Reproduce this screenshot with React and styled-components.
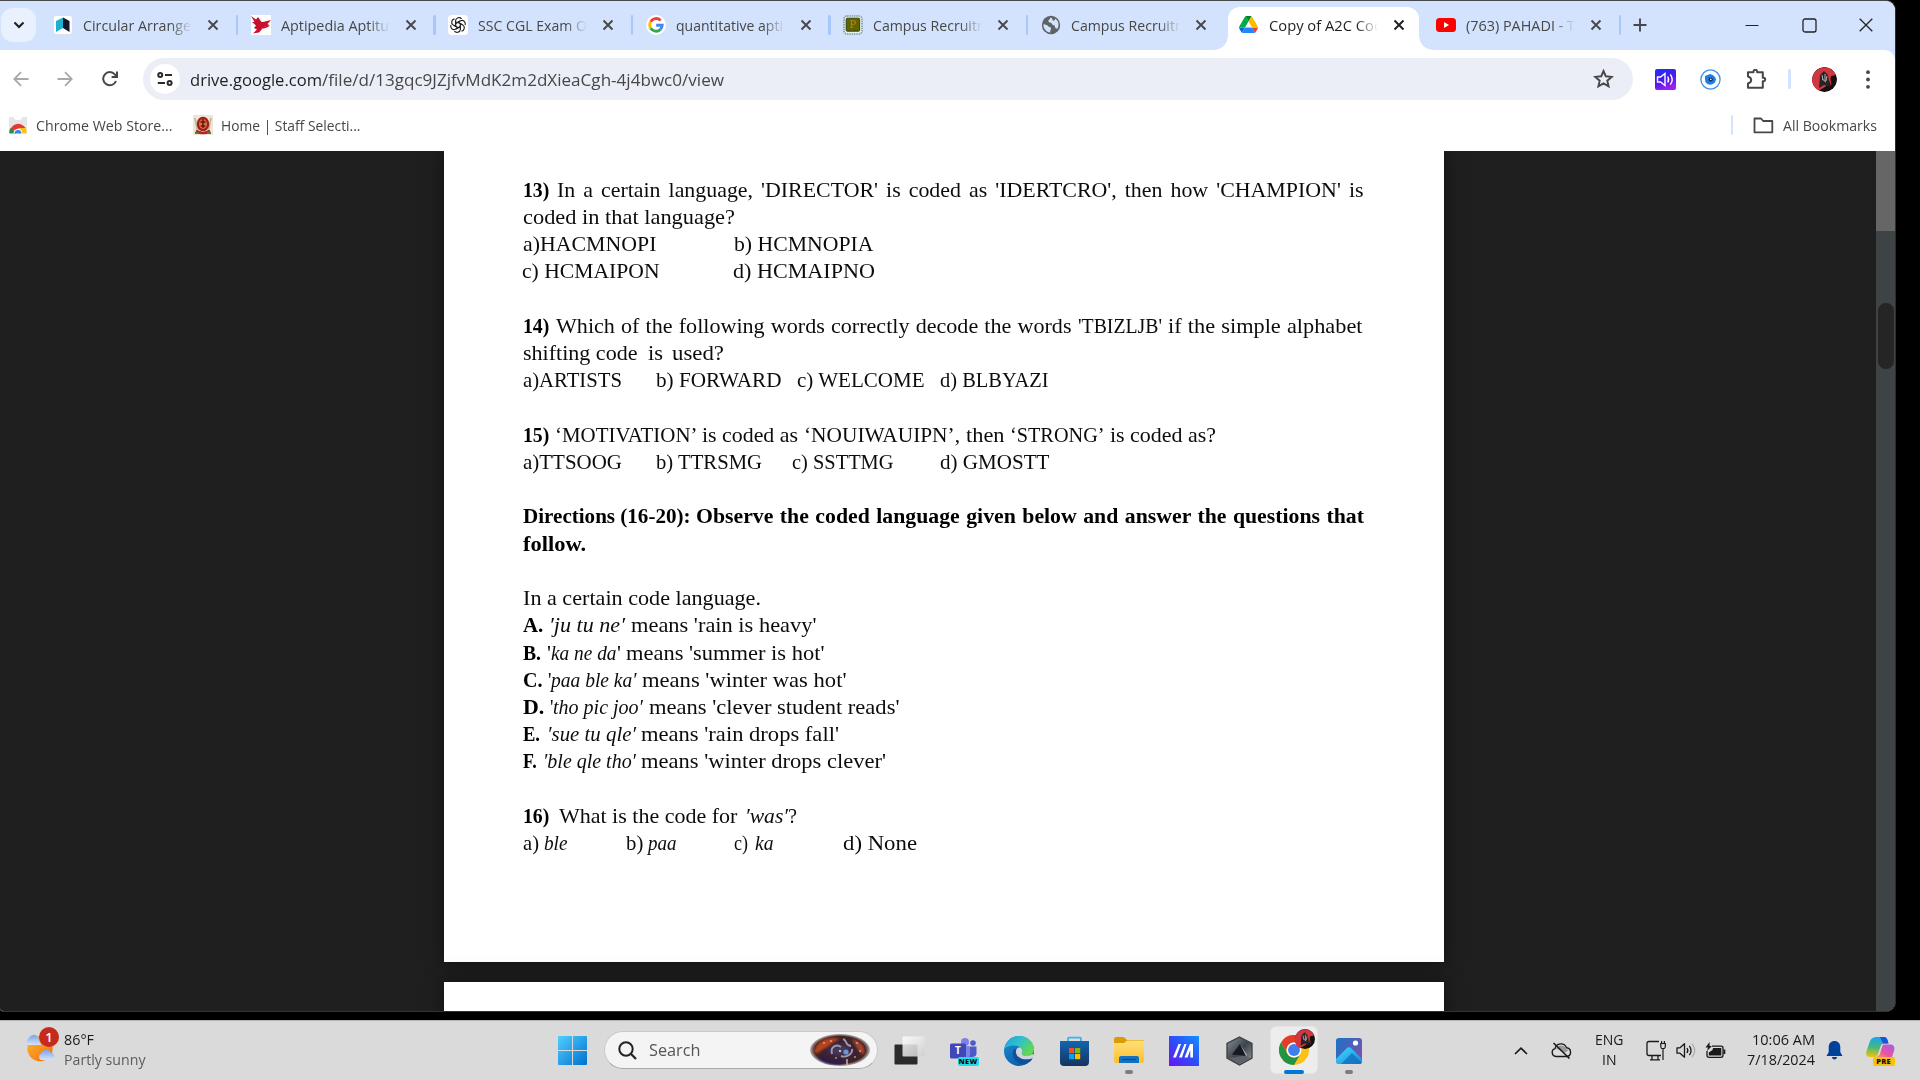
import React, { useLayoutEffect, useRef, useState } from "react";
import styled, { createGlobalStyle, css } from "styled-components";

const GlobalStyle = createGlobalStyle`
  * { box-sizing: border-box; }
  body { margin: 0; background: #000; overflow: hidden; }
  svg { display: block; flex: none; }
`;

const ui = `"Open Sans", "Noto Sans", sans-serif`;
const serif = `"Liberation Serif", serif`;

/* ---------- text set to a given measure ---------- */

const Measure = styled.span`
  display: block;
  flex: none;
  width: ${(p) => p.$w}px;
  margin-left: ${(p) => p.$ml || 0}px;
  white-space: pre;
`;
const Stretch = styled.span`
  display: inline-block;
  transform-origin: 0 50%;
  white-space: pre;
  vertical-align: top;
`;

function Fit({ w, ml, children, className }) {
  const ref = useRef(null);
  const [scale, setScale] = useState(1);
  useLayoutEffect(() => {
    ref.current.style.transform = "none";
    const natural = ref.current.getBoundingClientRect().width;
    ref.current.style.transform = `scaleX(${w / natural})`;
    setScale(w / natural);
  }, [w]);
  return (
    <Measure $w={w} $ml={ml} className={className}>
      <Stretch ref={ref} style={{ transform: `scaleX(${scale})` }}>{children}</Stretch>
    </Measure>
  );
}

/* ---------- shell ---------- */

const Desktop = styled.div`
  width: 1920px;
  height: 1080px;
  display: flex;
  flex-direction: column;
  background: #000;
  font-family: ${ui};
  overflow: hidden;
`;
const BrowserWindow = styled.div`
  width: 1896px;
  height: 1012px;
  margin-bottom: 8px;
  display: flex;
  flex-direction: column;
  border-top: 1px solid #47494d;
  border-right: 1px solid #2b2d2f;
  border-bottom: 1px solid #333;
  border-radius: 0 10px 10px 4px;
  overflow: hidden;
  background: #d3e3fd;
`;

/* ---------- tab strip ---------- */

const TabStrip = styled.div`
  height: 49px;
  flex: none;
  display: flex;
  background: #d3e3fd;
`;
const TabSearch = styled.div`
  width: 35px;
  height: 34px;
  margin: 7px 6px 0 1px;
  border-radius: 12px;
  background: #e9f0fe;
  display: flex;
  align-items: center;
  justify-content: center;
`;
const Tab = styled.div`
  position: relative;
  width: 197.6px;
  height: 49px;
  flex: none;
  display: flex;
  align-items: center;
  padding: 0 0 1px 11px;
  color: ${(p) => (p.$active ? "#1f1f1f" : "#474747")};
`;
const ActiveShape = styled.div`
  position: absolute;
  left: 0;
  top: 6px;
  width: 191.5px;
  height: 43px;
  border-radius: 12px 12px 0 0;
  background: #fff;
  &::before, &::after {
    content: "";
    position: absolute;
    bottom: 0;
    width: 14px;
    height: 14px;
  }
  &::before { left: -14px; background: radial-gradient(circle at 0 0, transparent 13.5px, #fff 14px); }
  &::after { right: -14px; background: radial-gradient(circle at 100% 0, transparent 13.5px, #fff 14px); }
`;
const Favicon = styled.div`
  position: relative;
  width: 20px;
  height: 20px;
  flex: none;
`;
const TabTitle = styled.div`
  position: relative;
  width: 109px;
  margin-left: 10px;
  font-size: 15px;
  line-height: 22px;
  overflow: hidden;
  mask-image: linear-gradient(90deg, #000 80%, transparent 100%);
`;
const TabClose = styled.div`
  position: relative;
  width: 12px;
  margin-left: 15px;
`;
const TabRule = styled.div`
  width: 2.5px;
  height: 20px;
  margin-left: 16.5px;
  border-radius: 2px;
  background: #a8c7fa;
`;
const NewTab = styled.div`
  width: 34px;
  display: flex;
  align-items: center;
  justify-content: center;
  padding-bottom: 1px;
`;
const Controls = styled.div`
  margin-left: auto;
  padding: 0 22px 1px 0;
  display: flex;
  align-items: center;
  gap: 42.5px;
`;

const CloseGlyph = () => (
  <svg width="12" height="12" viewBox="0 0 12 12">
    <path d="M1.5 1.5 L10.5 10.5 M10.5 1.5 L1.5 10.5" stroke="currentColor" strokeWidth="1.9" />
  </svg>
);

/* ---------- favicons ---------- */

const FavBook = () => (
  <svg width="20" height="20" viewBox="0 0 20 20">
    <rect x="0.4" y="0.4" width="19" height="19" rx="3" fill="#fff" stroke="#c9d6ea" strokeWidth=".6" />
    <path d="M3 6 L10 2.5 V13 L3 17 Z" fill="#1fb0d0" />
    <path d="M10 2.5 L16.5 6 V17 L10 13 Z" fill="#11182b" />
  </svg>
);
const FavBird = () => (
  <svg width="20" height="20" viewBox="0 0 20 20">
    <rect width="20" height="20" fill="#fff" />
    <path d="M0 1 L5 4.5 L7 2 L10.5 7 L12 7 L20 5 L16.5 9 L19 10.5 L15 11 L12 13 L8 17.5 L2 18.5 L6 14.5 L3 13 L5 10.5 L1 7 L3.5 7 Z" fill="#c8102e" />
    <path d="M12 13 L17.5 11" stroke="#c8102e" strokeWidth="1.6" fill="none" />
  </svg>
);
const FavGpt = () => (
  <svg width="20" height="20" viewBox="0 0 20 20">
    <rect width="20" height="20" rx="4" fill="#fff" />
    <g fill="none" stroke="#222" strokeWidth="1.15">
      {[0, 60, 120, 180, 240, 300].map((a) => (
        <path key={a} transform={`rotate(${a} 10 10)`} d="M7.6 11.4 V5.6 A3.4 3.4 0 0 1 13.6 3.9 M7.6 8.6 L12.2 6" />
      ))}
    </g>
  </svg>
);
const FavGoogle = () => (
  <svg width="20" height="20" viewBox="0 0 20 20">
    <circle cx="10" cy="10" r="10" fill="#fff" />
    <g fill="none" strokeWidth="2.9">
      <path d="M14.6 5.4 A6.2 6.2 0 0 0 4.7 6.8" stroke="#ea4335" />
      <path d="M4.7 6.8 A6.2 6.2 0 0 0 4.7 13.2" stroke="#fbbc05" />
      <path d="M4.7 13.2 A6.2 6.2 0 0 0 14.2 14.6" stroke="#34a853" />
      <path d="M14.2 14.6 A6.2 6.2 0 0 0 16.2 10.3 H10.2" stroke="#4285f4" />
    </g>
  </svg>
);
const PLetter = styled.span`
  position: absolute;
  left: 6px;
  top: 1px;
  font: 12px/16px ${serif};
  color: #b8860b;
`;
const FavP = () => (
  <>
    <svg width="20" height="20" viewBox="0 0 20 20">
      <rect x="1" y="1" width="18" height="18" rx="3" fill="#e8f1ec" stroke="#7d9c98" strokeWidth="1.6" strokeDasharray="1.5 .8" />
      <rect x="3.2" y="3.2" width="13.4" height="13" rx="1" fill="#5f6400" stroke="#33421b" />
    </svg>
    <PLetter>P</PLetter>
  </>
);
const FavGlobe = () => (
  <svg width="20" height="20" viewBox="0 0 20 20">
    <circle cx="10" cy="10" r="9.2" fill="#5f6368" />
    <path d="M2.5 9 C4 10 6 9.5 7 11 C8 12.5 10 11.5 10 13.5 C10 15 9 15 9.2 17.4 C5.3 17.2 2 13.5 2.5 9 Z M9.5 2.6 C9 5 7 4.5 7.5 6.5 C8 8 10.5 7 11 9 C11.5 10.5 14 9.5 14 12 C14 13.5 15.5 13 16.2 14 C18.8 10.5 17.5 5.3 14 3.8 C14 6 12 6 11.5 5 C11 4 11.6 3.2 9.5 2.6 Z" fill="#d3e3fd" />
  </svg>
);
const FavDrive = () => (
  <svg width="19" height="19" viewBox="0 0 87.3 78">
    <path d="M6.6 66.85l3.85 6.65c.8 1.4 1.95 2.5 3.3 3.3L27.5 53H0c0 1.55.4 3.1 1.2 4.5z" fill="#0066da" />
    <path d="M43.65 25L29.9 1.2c-1.35.8-2.5 1.9-3.3 3.3L1.2 48.5A9 9 0 0 0 0 53h27.5z" fill="#00ac47" />
    <path d="M73.55 76.8c1.35-.8 2.5-1.9 3.3-3.3l1.6-2.75 7.65-13.25c.8-1.4 1.2-2.95 1.2-4.5H59.8l5.85 11.5z" fill="#ea4335" />
    <path d="M43.65 25L57.4 1.2C56.05.4 54.5 0 52.9 0H34.4c-1.6 0-3.15.45-4.5 1.2z" fill="#00832d" />
    <path d="M59.8 53H27.5L13.75 76.8c1.35.8 2.9 1.2 4.5 1.2h50.8c1.6 0 3.15-.45 4.5-1.2z" fill="#2684fc" />
    <path d="M73.4 26.5L60.7 4.5c-.8-1.4-1.95-2.5-3.3-3.3L43.65 25 59.8 53h27.45c0-1.55-.4-3.1-1.2-4.5z" fill="#ffba00" />
  </svg>
);
const FavYouTube = () => (
  <svg width="20" height="20" viewBox="0 0 20 20">
    <rect y="3" width="20" height="14" rx="3.5" fill="#f00" />
    <path d="M8 7 L13 10 L8 13 Z" fill="#fff" />
  </svg>
);

const TABS = [
  { icon: FavBook, title: "Circular Arrange", w: 108 },
  { icon: FavBird, title: "Aptipedia Aptitu", w: 108 },
  { icon: FavGpt, title: "SSC CGL Exam O", w: 109 },
  { icon: FavGoogle, title: "quantitative apti", w: 107 },
  { icon: FavP, title: "Campus Recruitm", w: 117 },
  { icon: FavGlobe, title: "Campus Recruitm", w: 117 },
  { icon: FavDrive, title: "Copy of A2C Cod", w: 114, active: true },
  { icon: FavYouTube, title: "(763) PAHADI - T", w: 109 },
];

/* ---------- toolbar ---------- */

const Chrome = styled.div`
  height: 101px;
  flex: none;
  background: #fff;
  border-radius: 0 10px 0 0;
  padding-top: 8px;
`;
const Toolbar = styled.div`
  height: 42px;
  display: flex;
  align-items: center;
  color: #474747;
`;
const Cell = styled.div`
  width: ${(p) => p.$w}px;
  flex: none;
  display: flex;
  align-items: center;
  justify-content: center;
`;
const Omnibox = styled.div`
  width: 1490px;
  height: 42px;
  flex: none;
  border-radius: 21px;
  background: #ebeef7;
  display: flex;
  align-items: center;
  padding: 0 19px 0 6.5px;
  font-size: 17px;
  line-height: 26px;
`;
const SiteInfo = styled.div`
  width: 30px;
  height: 30px;
  margin-right: 10.5px;
  border-radius: 50%;
  background: #fff;
  display: flex;
  align-items: center;
  justify-content: center;
`;
const Host = styled(Fit)`color: #1f1f1f; padding-top: 1px;`;
const Path = styled(Fit)`color: #474747; padding-top: 1px;`;
const Push = styled.div`margin-left: auto;`;
const Rule = styled.div`
  width: 2.5px;
  height: 20px;
  flex: none;
  border-radius: 2px;
  background: #d3e3fd;
`;
const Avatar = styled.div`
  width: 25px;
  height: 25px;
  flex: none;
  border-radius: 50%;
  overflow: hidden;
`;
const Bookmarks = styled.div`
  height: 51px;
  display: flex;
  align-items: center;
  padding: 0 18px 1px 8px;
  font-size: 15px;
  line-height: 22px;
  color: #474747;
`;

const FaceArt = ({ size }) => (
  <svg width={size} height={size} viewBox="0 0 25 25">
    <circle cx="12.5" cy="12.5" r="12.5" fill="#141112" />
    <path d="M0 12.5 A12.5 12.5 0 0 1 24 8 L19 9 L17 17 L13 20 L6 24 A12.5 12.5 0 0 1 0 12.5 Z" fill="#d3363f" />
    <path d="M8 8 L12 4 L16 8 L18 20 L12 18 L7 21 Z" fill="#2a2326" />
    <path d="M10 8 L11 13 M13 7 V14 M15 9 L14 14 M10 12 L14 15" stroke="#b9aeae" strokeWidth="1" />
    <path d="M17 7 L19 18" stroke="#e0343c" strokeWidth="1" />
  </svg>
);

/* ---------- document ---------- */

const Viewer = styled.div`
  flex: 1;
  min-height: 0;
  display: flex;
  background: #1f1f1f;
`;
const Canvas = styled.div`
  width: 1876px;
  padding-left: 444px;
  display: flex;
  flex-direction: column;
  gap: 20px;
  overflow: hidden;
`;
const Page = styled.div`
  width: 1000px;
  height: ${(p) => p.$h}px;
  flex: none;
  background: #fff;
  box-shadow: 0 0 18px rgba(0, 0, 0, 0.5);
  padding: 25.8px 0 0 79px;
`;
const Line = styled.div`
  height: 27.23px;
  display: flex;
  font-family: ${serif};
  font-size: 20.7px;
  line-height: 27.23px;
  color: #0c0c0c;
`;
const Segment = styled(Fit)`
  ${(p) => p.$k === "b" && css`font-weight: 700; color: #000;`}
  ${(p) => p.$k === "i" && css`font-style: italic;`}
  word-spacing: ${(p) => p.$ws || 0}px;
`;
const Scrollbar = styled.div`
  width: 19px;
  background: #3e4346;
`;
const ScrollHead = styled.div`
  height: 80px;
  margin-bottom: 72px;
  background: #666;
`;
const ScrollThumb = styled.div`
  width: 16px;
  height: 66px;
  margin-left: 2px;
  border-radius: 8px;
  background: #252525;
`;

// Each segment: text, left edge, right edge, kind, word spacing
const LINES = [
  [["13)", 523, 549.3, "b"], ["In a certain language, 'DIRECTOR' is coded as 'IDERTCRO', then how 'CHAMPION' is", 557.5, 1364, "", 2.4]],
  [["coded in that language?", 523, 735]],
  [["a)HACMNOPI", 523, 656.5], ["b) HCMNOPIA", 734, 873.5]],
  [["c) HCMAIPON", 522, 659.5], ["d) HCMAIPNO", 733, 875]],
  [],
  [["14)", 523, 549.3, "b"], ["Which of the following words correctly decode the words", 556, 1071.5, "", 0.6], ["'TBIZLJB'", 1078.5, 1162.5], ["if the simple alphabet", 1168.5, 1363, "", 0.6]],
  [["shifting code", 523, 637.5], ["is", 647.5, 662.5], ["used?", 672, 724]],
  [["a)ARTISTS", 523, 622], ["b) FORWARD", 656, 781.5], ["c) WELCOME", 796.5, 924], ["d) BLBYAZI", 940, 1048.5]],
  [],
  [["15)", 523, 549.3, "b"], ["‘MOTIVATION’", 555, 697.5], ["is coded as", 702.5, 798.5], ["‘NOUIWAUIPN’,", 804.5, 960.5], ["then", 966.5, 1005], ["‘STRONG’", 1010.5, 1105], ["is coded as?", 1110, 1216]],
  [["a)TTSOOG", 523, 622], ["b) TTRSMG", 656, 762], ["c) SSTTMG", 792, 893.5], ["d) GMOSTT", 940, 1049.5]],
  [],
  [["Directions (16-20):", 523, 690.5, "b"], ["Observe the coded language given below and answer the questions that", 696, 1364, "b", 1]],
  [["follow.", 523, 586, "b"]],
  [],
  [["In a certain code language.", 523, 761]],
  [["A.", 523, 543.3, "b"], ["′ju tu ne′", 549.5, 625.5, "i"], ["means 'rain is heavy'", 631, 816.5]],
  [["B.", 523, 541, "b"], ["'", 547, 551], ["ka ne da", 551, 616.5, "i"], ["'", 616.5, 620.5], ["means 'summer is hot'", 626, 824.5]],
  [["C.", 523, 542.5, "b"], ["'", 548, 551.5], ["paa ble ka′", 551, 636.5, "i"], ["means 'winter was hot'", 642, 846.5]],
  [["D.", 523, 544.3, "b"], ["'", 550, 553.5], ["tho pic joo′", 553.5, 643.5, "i"], ["means 'clever student reads'", 649, 899.5]],
  [["E.", 523, 540, "b"], ["′sue tu qle′", 546.5, 635.5, "i"], ["means 'rain drops fall'", 641, 839]],
  [["F.", 523, 536.8, "b"], ["′ble qle tho′", 543, 636, "i"], ["means 'winter drops clever'", 641.5, 886.5]],
  [],
  [["16)", 523, 549.3, "b"], ["What is the code for", 559.5, 737.8], ["′was′", 745, 788, "i"], ["?", 788.5, 797.5]],
  [["a)", 523, 539], ["ble", 544, 567.5, "i"], ["b)", 625.5, 642.8], ["paa", 648, 676.5, "i"], ["c)", 734.5, 748.5], ["ka", 755, 773.5, "i"], ["d) None", 843, 917]],
];

function DocLine({ segments }) {
  let cursor = 523;
  return (
    <Line>
      {segments.map(([text, from, to, kind, ws], i) => {
        const ml = from - cursor;
        cursor = to;
        return <Segment key={i} ml={ml} w={to - from} $k={kind} $ws={ws}>{text}</Segment>;
      })}
    </Line>
  );
}

/* ---------- taskbar ---------- */

const Taskbar = styled.div`
  height: 60px;
  flex: none;
  display: flex;
  align-items: stretch;
  background: #dadada;
  border-top: 1px solid #b4b4b4;
  color: #1a1a1a;
  font-size: 15px;
`;
const Weather = styled.div`
  width: 545px;
  display: flex;
  padding: 8px 0 0 24px;
`;
const WeatherIcon = styled.div`
  position: relative;
  width: 40px;
  margin-top: 4px;
`;
const Badge = styled.div`
  position: absolute;
  left: 15px;
  top: -6px;
  width: 20px;
  height: 20px;
  border-radius: 50%;
  background: #c42b1c;
  color: #fff;
  font-size: 13px;
  font-weight: 600;
  line-height: 20px;
  text-align: center;
`;
const Stack = styled.div`
  display: flex;
  flex-direction: column;
  align-items: ${(p) => p.$align || "flex-start"};
  line-height: 20px;
  padding-bottom: ${(p) => p.$lift || 0}px;
`;
const Muted = styled(Fit)`color: #5c5c5c;`;
const SearchPill = styled.div`
  width: 274px;
  height: 38px;
  margin: 10px 4px 0 3.5px;
  border-radius: 19px;
  background: #f4f4f4;
  border: 1px solid #c9c9c9;
  border-bottom-color: #aaa;
  display: flex;
  align-items: center;
  padding: 0 5px 0 13px;
  font-size: 17px;
  line-height: 24px;
  color: #555;
`;
const SearchArt = styled.div`
  margin-left: auto;
  width: 62px;
  height: 33px;
  border-radius: 50%;
  filter: blur(0.7px);
`;
const TaskApp = styled.div`
  position: relative;
  width: 55px;
  flex: none;
  align-self: stretch;
  display: flex;
  align-items: center;
  justify-content: center;
`;
const ActiveTile = styled.div`
  width: 48px;
  height: 48px;
  margin-bottom: 1px;
  border-radius: 6px;
  background: #ededed;
  border: 1px solid #e4e4e4;
  display: flex;
  align-items: center;
  justify-content: center;
`;
const Indicator = styled.div`
  position: absolute;
  bottom: 6px;
  left: 50%;
  width: ${(p) => (p.$active ? 20 : 8)}px;
  height: 4px;
  border-radius: 2px;
  transform: translateX(-50%);
  background: ${(p) => (p.$active ? "#0078d4" : "#7d7d7d")};
`;
const Overlay = styled.div`
  position: absolute;
  left: 28px;
  top: 8px;
`;
const Tag = styled.div`
  position: absolute;
  left: ${(p) => p.$x}px;
  top: ${(p) => p.$y}px;
  width: ${(p) => p.$w}px;
  height: 9px;
  border-radius: 2px;
  background: ${(p) => p.$bg};
  color: #111;
  font: 800 7.5px/9px ${ui};
  letter-spacing: 0.2px;
  text-align: center;
`;
const TeamsLetter = styled.div`
  position: absolute;
  left: 13.5px;
  top: 21px;
  width: 16px;
  font: 700 10px/16px ${ui};
  color: #fff;
  text-align: center;
`;
const Tray = styled.div`
  margin-left: auto;
  display: flex;
  align-items: center;
`;

const ChromeLogo = ({ size }) => (
  <svg width={size} height={size} viewBox="0 0 48 48">
    <circle cx="24" cy="24" r="24" fill="#fbc116" />
    <path d="M3.2 12 A24 24 0 0 1 44.8 12 H24 A12 12 0 0 0 13.6 30 Z" fill="#e33b2e" />
    <path d="M3.2 12 A24 24 0 0 0 24 48 L34.4 30 A12 12 0 0 1 13.6 30 Z" fill="#229342" />
    <circle cx="24" cy="24" r="12" fill="#fff" />
    <circle cx="24" cy="24" r="9.5" fill="#3f7fed" />
  </svg>
);

const Galaxy = () => (
  <svg width="60" height="32" viewBox="0 0 60 32">
    <defs>
      <radialGradient id="gx" cx=".5" cy=".5" r=".5">
        <stop offset="0" stopColor="#4a4260" /><stop offset=".5" stopColor="#3a2238" />
        <stop offset=".85" stopColor="#43231f" /><stop offset="1" stopColor="#5a4650" stopOpacity=".4" />
      </radialGradient>
      <filter id="soft"><feGaussianBlur stdDeviation="1.2" /></filter>
    </defs>
    <ellipse cx="30" cy="16" rx="30" ry="16" fill="url(#gx)" />
    <g filter="url(#soft)">
      <path d="M4 17 C8 5 20 2 30 5 C22 8 20 12 12 16 C9 18 6 21 4 17 Z" fill="#b5451f" />
      <path d="M42 5 C50 7 56 12 54 20 C50 21 46 12 42 5 Z" fill="#a8452b" />
      <path d="M10 23 C18 29 26 29 32 28" stroke="#2a1a55" strokeWidth="4" fill="none" />
    </g>
    <path d="M22 20 C20 12 27 10 31 13 M33 5 C38 7 34 11 41 12 M31 22 C36 24 43 20 42 15 M37 25 V31" stroke="#b9b2c9" strokeWidth="1.9" strokeOpacity=".8" fill="none" />
    <circle cx="36" cy="18" r="2.6" fill="#6d94d8" />
    <g fill="#f1dfd8">
      <circle cx="14" cy="9" r=".8" /><circle cx="21" cy="7" r=".8" /><circle cx="47" cy="9" r=".8" />
      <circle cx="50" cy="17" r=".8" /><circle cx="30" cy="17" r="1.1" /><circle cx="26" cy="24" r=".8" /><circle cx="45" cy="23" r=".8" />
    </g>
  </svg>
);

function BrowserTabs() {
  return (
    <TabStrip>
      <TabSearch>
        <svg width="12" height="8" viewBox="0 0 12 8"><path d="M1.5 1.5 L6 6 L10.5 1.5" stroke="#1f1f1f" strokeWidth="2.1" fill="none" /></svg>
      </TabSearch>
      {TABS.map(({ icon: Icon, title, w, active }, i) => (
        <Tab key={i} $active={active}>
          {active && <ActiveShape />}
          <Favicon><Icon /></Favicon>
          <TabTitle><Fit w={w}>{title}</Fit></TabTitle>
          <TabClose><CloseGlyph /></TabClose>
          {!active && i !== 5 && <TabRule />}
        </Tab>
      ))}
      <NewTab>
        <svg width="14" height="14" viewBox="0 0 14 14"><path d="M7 .5 V13.5 M.5 7 H13.5" stroke="#474747" strokeWidth="1.9" /></svg>
      </NewTab>
      <Controls>
        <svg width="14" height="14" viewBox="0 0 14 14"><path d="M.5 7.5 H13.5" stroke="#222" strokeWidth="1.2" /></svg>
        <svg width="15" height="15" viewBox="0 0 15 15"><rect x="1" y="1" width="13" height="13" rx="2" fill="none" stroke="#222" strokeWidth="1.3" /></svg>
        <svg width="14" height="14" viewBox="0 0 14 14"><path d="M.7 .7 L13.3 13.3 M13.3 .7 L.7 13.3" stroke="#222" strokeWidth="1.3" /></svg>
      </Controls>
    </TabStrip>
  );
}

function BrowserToolbar() {
  return (
    <Toolbar>
      <Cell $w={41}>
        <svg width="16" height="16" viewBox="0 0 16 16"><path d="M15.5 8 H1.5 M8 1.2 L1.3 8 L8 14.8" stroke="#a9a9a9" strokeWidth="1.8" fill="none" /></svg>
      </Cell>
      <Cell $w={48}>
        <svg width="16" height="16" viewBox="0 0 16 16"><path d="M.5 8 H14.5 M8 1.2 L14.7 8 L8 14.8" stroke="#a9a9a9" strokeWidth="1.8" fill="none" /></svg>
      </Cell>
      <Cell $w={42}>
        <svg width="16" height="16" viewBox="0 0 16 16"><path d="M14 10 A6.6 6.6 0 1 1 12.8 3.4 L14.3 5" stroke="#474747" strokeWidth="2" fill="none" /><path d="M15 .5 V6 H9.6" stroke="#474747" strokeWidth="2" fill="none" /></svg>
      </Cell>
      <Cell $w={12} />
      <Omnibox>
        <SiteInfo>
          <svg width="16" height="14" viewBox="0 0 16 14">
            <g fill="none" stroke="#2b2b2b" strokeWidth="2"><circle cx="3.2" cy="3" r="2" /><circle cx="12.6" cy="11" r="2" /><path d="M8 3 H15 M.8 11 H8" /></g>
          </svg>
        </SiteInfo>
        <Host w={132}>drive.google.com</Host>
        <Path w={402}>/file/d/13gqc9JZjfvMdK2m2dXieaCgh-4j4bwc0/view</Path>
        <Push>
          <svg width="21" height="20" viewBox="0 0 21 20"><path d="M10.5 2 L12.8 7.3 L18.7 7.9 L14.3 11.7 L15.6 17.4 L10.5 14.4 L5.4 17.4 L6.7 11.7 L2.3 7.9 L8.2 7.3 Z" fill="none" stroke="#474747" strokeWidth="1.9" /></svg>
        </Push>
      </Omnibox>
      <Cell $w={64.5}>
        <svg width="21" height="21" viewBox="0 0 21 21">
          <defs><linearGradient id="vol" x1="0" y1="0" x2=".4" y2="1"><stop offset="0" stopColor="#1d33f5" /><stop offset=".6" stopColor="#4a17ee" /><stop offset="1" stopColor="#9a1ff0" /></linearGradient></defs>
          <rect width="21" height="21" rx="2" fill="url(#vol)" />
          <path d="M2.5 8 H5.5 L10 4.5 V16.5 L5.5 13 H2.5 Z M12.7 7.5 Q14.5 10.5 12.7 13.5 M15.3 5.3 Q19 10.5 15.3 15.7" stroke="#fff" strokeWidth="1.4" fill="none" />
        </svg>
      </Cell>
      <Cell $w={26}>
        <svg width="21" height="21" viewBox="0 0 21 21">
          <circle cx="10.5" cy="10.5" r="9.6" fill="#fff" stroke="#3f8fe8" strokeWidth="1.3" />
          <path d="M5 7 L10 5 Q15 6 16 10.5 Q15 15.5 10 15.8 Q5 15 5 10.5 Z" fill="#1c7fe6" /><circle cx="10.7" cy="10.5" r="2.1" fill="#0b2a52" /><circle cx="10.8" cy="10.4" r=".8" fill="#fff" />
        </svg>
      </Cell>
      <Cell $w={66}>
        <svg width="21" height="21" viewBox="0 0 21 21">
          <path d="M2 3.2 H7.5 V2.6 A1.8 1.8 0 0 1 11.1 2.6 V3.2 H16.8 V8.7 H17.4 A1.8 1.8 0 0 1 17.4 12.3 H16.8 V18.8 H2 V14.5 Q5.2 13.5 5.2 11 Q5.2 8.5 2 7.5 Z" fill="none" stroke="#474747" strokeWidth="2" strokeLinejoin="round" />
        </svg>
      </Cell>
      <Cell $w={0}><Rule /></Cell>
      <Cell $w={22} />
      <Avatar><FaceArt size={25} /></Avatar>
      <Cell $w={63}>
        <svg width="4" height="19" viewBox="0 0 4 19"><g fill="#474747"><circle cx="2" cy="2.2" r="1.9" /><circle cx="2" cy="9.5" r="1.9" /><circle cx="2" cy="16.8" r="1.9" /></g></svg>
      </Cell>
    </Toolbar>
  );
}

function BookmarkBar() {
  return (
    <Bookmarks>
      <svg width="20" height="20" viewBox="0 0 20 20">
        <path d="M1 2 H19 V18 H1 Z" fill="#e6e6e6" /><path d="M6 2 H14 V4 Q10 6 6 4 Z" fill="#fff" />
        <path d="M2 18 A8.4 8.4 0 0 1 17.6 13 L10 13.5 Z" fill="#e33b2e" />
        <path d="M2.4 13 A8.6 8.6 0 0 0 1.4 18.5 H8 Z" fill="#229342" />
        <path d="M11 13 H17.8 Q18.8 15 18.6 18.5 H12 Z" fill="#fbc116" />
        <path d="M5.5 18.5 A4.5 4.5 0 0 1 14.5 18.5 Z" fill="#fff" /><path d="M6.5 18.5 A3.5 3.5 0 0 1 13.5 18.5 Z" fill="#3f7fed" />
      </svg>
      <Fit ml={7.5} w={136.5}>Chrome Web Store...</Fit>
      <Cell $w={21} />
      <svg width="20" height="20" viewBox="0 0 20 20">
        <rect width="20" height="20" fill="#efe6da" />
        <path d="M2 3 L5 18 M18 3 L15 18" stroke="#c2b08c" strokeWidth="1.5" />
        <ellipse cx="10" cy="9" rx="6.2" ry="7.3" fill="#a01f1c" /><ellipse cx="10" cy="9" rx="4" ry="5" fill="#d1703f" />
        <path d="M10 4 V13 M7.5 7 H12.5 M7.8 11 H12.2" stroke="#6f0f12" strokeWidth="1.4" />
        <path d="M3 16 Q10 20 17 16" stroke="#b32522" strokeWidth="2.6" fill="none" /><path d="M2 18 H6 M14 18 H18" stroke="#5d7a35" strokeWidth="2" />
      </svg>
      <Fit ml={8} w={139.5}>Home | Staff Selecti...</Fit>
      <Push><Rule /></Push>
      <Cell $w={20} />
      <svg width="21" height="17" viewBox="0 0 21 17"><path d="M1.5 1.5 H8 L10.2 4 H19.3 V15.3 H1.5 Z" fill="none" stroke="#474747" strokeWidth="1.8" strokeLinejoin="round" /></svg>
      <Fit ml={9} w={94}>All Bookmarks</Fit>
    </Bookmarks>
  );
}

function WindowsTaskbar() {
  return (
    <Taskbar>
      <Weather>
        <WeatherIcon>
          <svg width="32" height="32" viewBox="0 0 32 32">
            <defs>
              <linearGradient id="sun" x1="0" y1="0" x2="1" y2="1"><stop offset="0" stopColor="#fdbb2d" /><stop offset="1" stopColor="#f26a10" /></linearGradient>
              <linearGradient id="cl" x1="0" y1="0" x2="0" y2="1"><stop offset="0" stopColor="#7ea3e8" /><stop offset="1" stopColor="#d4e3fb" /></linearGradient>
            </defs>
            <circle cx="16" cy="15.5" r="12.7" fill="url(#sun)" />
            <path d="M4 12 A4 4 0 0 1 4.5 5.5 A5.5 5.5 0 0 1 14 4 L17 12 Z" fill="url(#cl)" />
            <path d="M17 27 A3.8 3.8 0 0 1 17.3 20.2 A5.2 5.2 0 0 1 27 20 A3.6 3.6 0 0 1 28 27 Z" fill="url(#cl)" />
          </svg>
          <Badge>1</Badge>
        </WeatherIcon>
        <Stack><Fit w={30}>86°F</Fit><Muted w={81.5}>Partly sunny</Muted></Stack>
      </Weather>
      <TaskApp>
        <svg width="29" height="29" viewBox="0 0 29 29">
          <defs><linearGradient id="win" x1="0" y1="0" x2="1" y2="1"><stop offset="0" stopColor="#4fd0ff" /><stop offset="1" stopColor="#0070d0" /></linearGradient></defs>
          <path d="M0 1 Q0 0 1 0 H14 V14 H0 Z M15 0 H28 Q29 0 29 1 V14 H15 Z M0 15 H14 V29 H1 Q0 29 0 28 Z M15 15 H29 V28 Q29 29 28 29 H15 Z" fill="url(#win)" />
        </svg>
      </TaskApp>
      <SearchPill>
        <svg width="19" height="19" viewBox="0 0 19 19"><circle cx="8" cy="8" r="6.7" fill="none" stroke="#222" strokeWidth="2" /><path d="M12.8 12.8 L18 18" stroke="#222" strokeWidth="2.2" /></svg>
        <Fit ml={12.5} w={51.5}>Search</Fit>
        <SearchArt><Galaxy /></SearchArt>
      </SearchPill>
      <TaskApp>
        <svg width="31" height="29" viewBox="0 0 31 29">
          <defs><linearGradient id="tv" x1="0" y1="0" x2="1" y2="1"><stop offset="0" stopColor="#fff" /><stop offset="1" stopColor="#cfcfcf" /></linearGradient></defs>
          <rect x=".5" y="8.5" width="23" height="20" rx="1" fill="#2b2b2b" />
          <rect x="8.5" y=".5" width="22" height="20" rx="1" fill="url(#tv)" opacity=".86" />
        </svg>
      </TaskApp>
      <TaskApp>
        <svg width="28" height="30" viewBox="0 0 28 30">
          <circle cx="15" cy="6" r="4" fill="#7b83eb" /><circle cx="23" cy="7" r="2.8" fill="#5059c9" />
          <path d="M15 10.5 H26.5 V18 Q26 21 22 21 H15 Z" fill="#5059c9" /><path d="M9 10.5 H20 V19 Q19 23 13 23 Q9 22 9 18 Z" fill="#7b83eb" />
          <rect x="0" y="7.5" width="16" height="15" rx="1.5" fill="#4048b8" />
        </svg>
        <TeamsLetter>T</TeamsLetter>
        <Tag $x={21} $y={35.5} $w={21} $bg="#1fe0e6">NEW</Tag>
      </TaskApp>
      <TaskApp>
        <svg width="30" height="30" viewBox="0 0 30 30">
          <defs>
            <linearGradient id="e1" x1="0" y1="0" x2="1" y2=".6"><stop offset="0" stopColor="#1e9de0" /><stop offset=".5" stopColor="#2fc2c9" /><stop offset="1" stopColor="#63d94a" /></linearGradient>
            <linearGradient id="e2" x1="0" y1="0" x2=".6" y2="1"><stop offset="0" stopColor="#1b8fd8" /><stop offset="1" stopColor="#0b5ea8" /></linearGradient>
          </defs>
          <circle cx="15" cy="15" r="15" fill="url(#e2)" />
          <path d="M0.5 13 C2 4 9 0 15 0 C24 0 30 6 30 13 C30 18 26 20 22 20 C18 20 17 18.5 18 17 C20 12 15 9.5 10 9.5 C6 9.5 2 11 .5 13 Z" fill="url(#e1)" />
          <path d="M10 13 C6 20 12 28 20 28.5 C24 27.5 27 25 28.5 22.5 C24 25 16 24 13.5 19 C12.4 16.5 13 14.5 14 13.5 Z" fill="#11509a" />
          <path d="M18 17 C19 14.5 18 12 15.5 11.2 C11 12 11 18 14 20.5 C18 24.5 25 24 28.5 22.5 L29.8 18 L28 18.3 C24 21 16.5 20.5 18 17 Z" fill="#dadada" opacity=".95" />
          <path d="M14.5 20.8 C18 24.5 25 24 28.6 22.3 L26 26 L18 26 Z" fill="#11509a" />
        </svg>
      </TaskApp>
      <TaskApp>
        <svg width="29" height="30" viewBox="0 0 29 30">
          <defs><linearGradient id="st" x1="0" y1="0" x2="0" y2="1"><stop offset="0" stopColor="#1564b0" /><stop offset="1" stopColor="#15345f" /></linearGradient></defs>
          <path d="M8 6 V2.5 Q8 1.7 9 1.7 H20 Q21 1.7 21 2.5 V6" fill="none" stroke="#35b6f0" strokeWidth="1.8" />
          <path d="M0 5 H29 V26 Q29 30 25 30 H4 Q0 30 0 26 Z" fill="url(#st)" />
          <rect x="9" y="12" width="5.2" height="5.2" fill="#f25022" /><rect x="15" y="12" width="5.2" height="5.2" fill="#7fba00" />
          <rect x="9" y="18" width="5.2" height="5.2" fill="#00a4ef" /><rect x="15" y="18" width="5.2" height="5.2" fill="#ffb900" />
        </svg>
      </TaskApp>
      <TaskApp>
        <svg width="30" height="27" viewBox="0 0 30 27">
          <defs><linearGradient id="fx" x1="0" y1="0" x2="0" y2="1"><stop offset="0" stopColor="#ffe07a" /><stop offset="1" stopColor="#fbc02d" /></linearGradient></defs>
          <path d="M0 2 Q0 0 2 0 H9 Q10 0 11 1 L13 3 H30 V10 H0 Z" fill="#dc9a06" />
          <path d="M0 6 H10 L13 3.4 H30 V24 Q30 26 28 26 H2 Q0 26 0 24 Z" fill="url(#fx)" />
          <path d="M5 26 V21 Q5 19 7 19 H23 Q25 19 25 21 V26 Z" fill="#1272c4" /><path d="M8 22.5 H22" stroke="#0a4b8c" strokeWidth="1.2" />
        </svg>
        <Indicator />
      </TaskApp>
      <TaskApp>
        <svg width="30" height="30" viewBox="0 0 30 30">
          <defs><linearGradient id="ma" x1="1" y1="0" x2="0" y2="1"><stop offset="0" stopColor="#1490ff" /><stop offset=".5" stopColor="#2d4dfa" /><stop offset="1" stopColor="#6a13f4" /></linearGradient></defs>
          <rect width="30" height="30" fill="url(#ma)" />
          <path d="M4 21.5 L9.5 8 H12 L7 21.5 Z M10 21.5 L15.5 8 H17.5 L13 21.5 Z M15.5 21.5 L21 8 H24 V21.5 H21.3 V14 L18.5 21.5 Z" fill="#fff" />
        </svg>
      </TaskApp>
      <TaskApp>
        <svg width="27" height="30" viewBox="0 0 27 30">
          <defs><linearGradient id="ac" x1="0" y1="0" x2="1" y2="1"><stop offset="0" stopColor="#8b9298" /><stop offset=".5" stopColor="#3d444b" /><stop offset="1" stopColor="#9a9ea3" /></linearGradient></defs>
          <path d="M13.5 1 L26 7.5 V22 L13.5 29 L1 22 V7.5 Z" fill="url(#ac)" stroke="#3a3f45" strokeWidth="1.3" />
          <path d="M14 8 L20 20 L6 18.5 Z" fill="#16191d" /><path d="M14 8 L21 19 L20 20 Z" fill="#aeb3b8" /><path d="M2 22 L20 20 L24 22 L13.5 28 Z" fill="#5c6268" />
        </svg>
      </TaskApp>
      <TaskApp>
        <ActiveTile><ChromeLogo size={30} /></ActiveTile>
        <Overlay><FaceArt size={20} /></Overlay>
        <Indicator $active />
      </TaskApp>
      <TaskApp>
        <svg width="26" height="26" viewBox="0 0 26 26">
          <defs>
            <linearGradient id="ph" x1="0" y1="0" x2="1" y2=".6"><stop offset="0" stopColor="#1972c6" /><stop offset="1" stopColor="#7355ae" /></linearGradient>
            <linearGradient id="pm" x1="0" y1="0" x2="1" y2="1"><stop offset="0" stopColor="#3fdcff" /><stop offset="1" stopColor="#1789da" /></linearGradient>
            <clipPath id="pc"><rect width="26" height="26" rx="3" /></clipPath>
          </defs>
          <g clipPath="url(#pc)">
            <rect width="26" height="26" fill="url(#ph)" />
            <path d="M0 21 L10.5 10.5 Q13 8 15.5 10.5 L26 21 V26 H0 Z" fill="url(#pm)" /><path d="M5 26 L16 15 L26 25 V26 Z" fill="#1168bd" opacity=".7" />
            <circle cx="19.5" cy="5" r="2.6" fill="#fff" />
          </g>
        </svg>
        <Indicator />
      </TaskApp>
      <Tray>
        <Cell $w={36}>
          <svg width="14" height="8" viewBox="0 0 14 8"><path d="M1 7 L7 1.2 L13 7" stroke="#1a1a1a" strokeWidth="1.7" fill="none" /></svg>
        </Cell>
        <Cell $w={44}>
          <svg width="21" height="17" viewBox="0 0 21 17">
            <path d="M5 14.5 A4 4 0 0 1 4 6.7 A6 6 0 0 1 15.5 5.8 A4.4 4.4 0 0 1 16 14.5 Z" fill="#ddd" stroke="#1a1a1a" strokeWidth="1.4" />
            <path d="M5 6.5 A5.6 5.6 0 0 1 15 6.5 L17.5 8.5 L14 10.5 Z" fill="#999" />
            <path d="M2.5 1 L18.5 16.5" stroke="#1a1a1a" strokeWidth="1.6" />
          </svg>
        </Cell>
        <Cell $w={52}><Stack $align="center" $lift={3}><Fit w={28.5}>ENG</Fit><Fit w={14.5}>IN</Fit></Stack></Cell>
        <Cell $w={10.5} />
        <svg width="20" height="21" viewBox="0 0 20 21">
          <path d="M13 1.5 H3 Q1 1.5 1 3.5 V13.5 Q1 15.5 3 15.5 H15 M6 15.5 V19.5 M12 15.5 V19.5 M4 19.8 H14" stroke="#1a1a1a" strokeWidth="1.3" fill="none" />
          <path d="M14.8 3.5 H19.3 V7 Q19 8.7 17 8.7 Q15 8.7 14.8 7 Z M17 9 V20 M15.6 1 V3.5 M18.4 1 V3.5" stroke="#1a1a1a" strokeWidth="1.2" fill="none" />
        </svg>
        <Cell $w={10} />
        <svg width="20" height="17" viewBox="0 0 20 17">
          <path d="M1 5.8 H4 L8.5 1.8 V15.2 L4 11.2 H1 Z M11 6 Q12.7 8.5 11 11 M13.4 3.8 Q16.6 8.5 13.4 13.2" stroke="#1a1a1a" strokeWidth="1.3" fill="none" strokeLinejoin="round" />
          <path d="M16 1.8 Q21.5 8.5 16 15.2" stroke="#aaa" strokeWidth="1.2" fill="none" />
        </svg>
        <Cell $w={9} />
        <svg width="21" height="17" viewBox="0 0 21 17">
          <path d="M7 4.2 H16 Q18 4.2 18 6 V13.5 Q18 15.3 16 15.3 H4 Q2 15.3 2 13.5 V9" stroke="#1a1a1a" strokeWidth="1.3" fill="none" />
          <path d="M8 6 H16.3 V13.6 H3.8 V10.6 L7.5 8 Z M18.5 7.5 H20.3 V12 H18.5 Z M4.6 0 L.5 5.5 H3 L2 9 L7 4 H4.6 Z" fill="#1a1a1a" />
        </svg>
        <Cell $w={21.5} />
        <Stack $align="flex-end" $lift={4}><Fit w={63}>10:06 AM</Fit><Fit w={68}>7/18/2024</Fit></Stack>
        <Cell $w={38}>
          <svg width="17" height="19" viewBox="0 0 17 19"><path d="M8.5 0 C12 0 14.3 2.6 14.3 6 V11 L16.5 15 H.5 L2.7 11 V6 C2.7 2.6 5 0 8.5 0 Z M5.8 16 H11.2 Q10.5 18.6 8.5 18.6 Q6.5 18.6 5.8 16 Z" fill="#00429a" /></svg>
        </Cell>
        <TaskApp>
          <svg width="29" height="28" viewBox="0 0 29 28">
            <defs>
              <linearGradient id="c1" x1=".3" y1="0" x2=".2" y2="1"><stop offset="0" stopColor="#19a5ee" /><stop offset=".5" stopColor="#45b87f" /><stop offset="1" stopColor="#f5c400" /></linearGradient>
              <linearGradient id="c2" x1="1" y1="0" x2="0" y2="1"><stop offset="0" stopColor="#a35cf5" /><stop offset=".6" stopColor="#e9559c" /><stop offset="1" stopColor="#ff9b4f" /></linearGradient>
            </defs>
            <path d="M11 0 H18 Q20.5 0 21.5 3 L22.5 6.5 H18 Q15.5 6.5 14.5 9.5 L12 17 Q11 20 8 20 H4 Q-1 20 .5 14 L4 4 Q5.5 0 11 0 Z" fill="url(#c1)" />
            <path d="M14 0 H18 Q20.5 0 21.5 3 L22.5 6.5 H17 Z" fill="#1b52d8" />
            <path d="M17.5 7.5 H24.5 Q29 7.5 28.3 13 L26 20 H9 Q13 20 14.2 16 L16 10 Q16.6 7.8 17.5 7.5 Z" fill="url(#c2)" />
          </svg>
          <Tag $x={19.5} $y={35.5} $w={22} $bg="#f8c20c">PRE</Tag>
        </TaskApp>
        <Cell $w={12} />
      </Tray>
    </Taskbar>
  );
}

export default function App() {
  return (
    <Desktop>
      <GlobalStyle />
      <BrowserWindow>
        <BrowserTabs />
        <Chrome>
          <BrowserToolbar />
          <BookmarkBar />
        </Chrome>
        <Viewer>
          <Canvas>
            <Page $h={811}>
              {LINES.map((segments, i) => <DocLine key={i} segments={segments} />)}
            </Page>
            <Page $h={60} />
          </Canvas>
          <Scrollbar><ScrollHead /><ScrollThumb /></Scrollbar>
        </Viewer>
      </BrowserWindow>
      <WindowsTaskbar />
    </Desktop>
  );
}
